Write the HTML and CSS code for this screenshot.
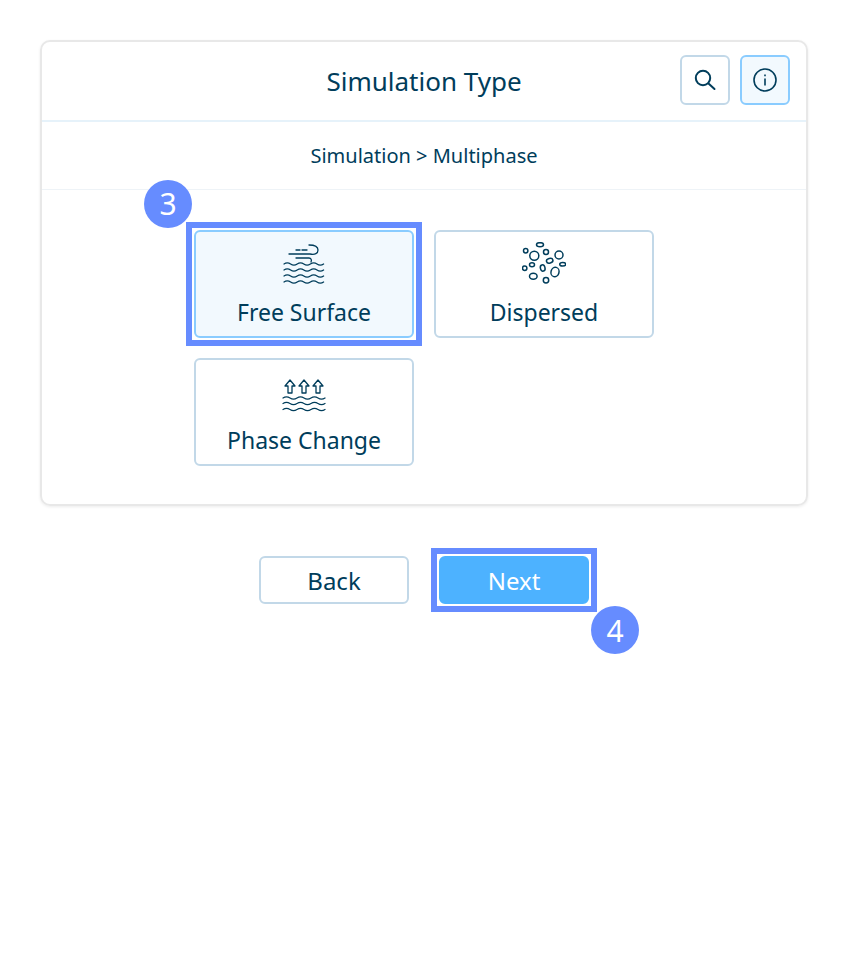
FILE: index.html
```html
<!DOCTYPE html>
<html lang="en">
<head>
  <title>Simulation Type</title>
  <meta charset="UTF-8">
  <link rel="stylesheet" href="styles.css">
</head>
<body>
  <div class="card">
    <div class="card-header">
      <h1 class="card-title">Simulation Type</h1>
      <div class="header-actions">
        <button class="icon-btn">
          <svg width="24" height="24" viewBox="0 0 24 24" fill="none" stroke="#003d5b" stroke-width="2" stroke-linecap="round">
            <circle cx="10" cy="10" r="7.200"/>
            <path d="M15.500 15.400L21.500 21"/>
          </svg>
        </button>
        <button class="icon-btn active">
          <svg width="24" height="24" viewBox="0 0 24 24" fill="none" stroke="#003d5b" stroke-width="1.600">
            <circle cx="12" cy="12" r="11"/>
            <path d="M12 10.500V17.500"/>
            <path d="M12 6.600V8.200"/>
          </svg>
        </button>
      </div>
    </div>
    <div class="breadcrumb">Simulation &gt; Multiphase</div>
    <div class="option-grid">
      <div class="option selected">
        <svg class="option-icon" width="44" height="44" viewBox="0 0 44 44" fill="none" stroke="#003d5b" stroke-width="1.300" stroke-linecap="round">
          <path d="M7 12H28C33 13 36 11.500 36 8C36 5 33 3 27 3"/>
          <path d="M14 8H18M20 8H25"/>
          <path d="M14 16H27C29 16 30 18 29 20"/>
          <path d="M2 22q3.300-2.200 6.600 0t6.600 0t6.600 0t6.600 0t6.600 0t6.600 0"/>
          <path d="M2 28q3.300-2.200 6.600 0t6.600 0t6.600 0t6.600 0t6.600 0t6.600 0"/>
          <path d="M2 34q3.300-2.200 6.600 0t6.600 0t6.600 0t6.600 0t6.600 0t6.600 0"/>
          <path d="M2 40q3.300-2.200 6.600 0t6.600 0t6.600 0t6.600 0t6.600 0t6.600 0"/>
        </svg>
        <span>Free Surface</span>
        <div class="step-badge">3</div>
      </div>
      <div class="option">
        <svg class="option-icon" width="44" height="44" viewBox="0 0 44 44" fill="none" stroke="#003d5b" stroke-width="1.500">
          <ellipse cx="18" cy="2.700" rx="3.500" ry="2"/>
          <circle cx="3.700" cy="8.700" r="2.200"/>
          <circle cx="12.300" cy="13.700" r="4.500"/>
          <circle cx="24" cy="10" r="2.500"/>
          <circle cx="37" cy="13" r="4"/>
          <ellipse cx="27.700" cy="18.700" rx="3.300" ry="2.300" transform="rotate(-15 27.700 18.700)"/>
          <ellipse cx="40.700" cy="22.300" rx="3" ry="1.800"/>
          <circle cx="2.700" cy="26.300" r="2.200"/>
          <ellipse cx="10" cy="22.700" rx="2.500" ry="2"/>
          <ellipse cx="20.700" cy="26" rx="2.300" ry="3.200" transform="rotate(-15 20.700 26)"/>
          <ellipse cx="33" cy="30" rx="4" ry="4.800" transform="rotate(15 33 30)"/>
          <ellipse cx="11.300" cy="34.300" rx="3.800" ry="3"/>
          <circle cx="24" cy="38.300" r="2.700"/>
        </svg>
        <span>Dispersed</span>
      </div>
      <div class="option">
        <svg class="option-icon" width="46" height="44" viewBox="0 0 46 44" fill="none" stroke="#003d5b" stroke-width="1.300" stroke-linecap="round" stroke-linejoin="round">
          <path d="M7 23V16H4L9 10L14 16H11V23Z"/>
          <path d="M21 23V16H18L23 10L28 16H25V23Z"/>
          <path d="M35 23V16H32L37 10L42 16H39V23Z"/>
          <path d="M2 28q3.500-2.200 7 0t7 0t7 0t7 0t7 0t7 0"/>
          <path d="M2 33.500q3.500-2.200 7 0t7 0t7 0t7 0t7 0t7 0"/>
          <path d="M2 39.500q3.500-2.200 7 0t7 0t7 0t7 0t7 0t7 0"/>
        </svg>
        <span>Phase Change</span>
      </div>
    </div>
  </div>
  <div class="footer-actions">
    <button class="btn">Back</button>
    <div class="next-wrap">
      <button class="btn btn-primary">Next</button>
      <div class="step-badge badge-next">4</div>
    </div>
  </div>
</body>
</html>
```

FILE: styles.css
```css
:root {
  --primary: #003d5b;
  --border: #c2d8e8;
  --active-border: #8accff;
  --active-bg: #f2f9fe;
  --blue: #4db2ff;
  --highlight: #668cff;
}

* {
  margin: 0;
  padding: 0;
  box-sizing: border-box;
  font-family: 'Noto Sans', sans-serif;
}

body {
  background: white;
  color: var(--primary);
  padding: 40px;
  min-height: 100vh;
}

.card {
  border: 2px solid #e8e8e8;
  border-radius: 10px;
  box-shadow: 0 1px 3px rgba(0, 0, 0, 0.08);
  height: 466px;
}

.card-header {
  display: flex;
  align-items: center;
  justify-content: center;
  position: relative;
  height: 80px;
  border-bottom: 2px solid #e6f2fa;
}

.card-title {
  font-size: 26px;
  font-weight: 400;
  line-height: 1.4;
}

.header-actions {
  position: absolute;
  top: 13px;
  right: 16px;
  display: flex;
  gap: 10px;
}

.icon-btn {
  display: flex;
  align-items: center;
  justify-content: center;
  width: 50px;
  height: 50px;
  background: white;
  border: 2px solid var(--border);
  border-radius: 6px;
}

.icon-btn.active {
  background: var(--active-bg);
  border-color: var(--active-border);
}

.breadcrumb {
  height: 68px;
  display: flex;
  align-items: center;
  justify-content: center;
  font-size: 20px;
  border-bottom: 1px solid #eef3f7;
}

.option-grid {
  display: grid;
  grid-template-columns: 220px 220px;
  grid-auto-rows: 108px;
  gap: 20px;
  justify-content: center;
  margin-top: 40px;
}

.option {
  position: relative;
  display: flex;
  flex-direction: column;
  align-items: center;
  border: 2px solid var(--border);
  border-radius: 6px;
  padding-top: 10px;
  font-size: 23px;
  line-height: 32px;
  background: white;
}

.option-icon {
  margin-bottom: 10px;
}

.option.selected {
  background: var(--active-bg);
  border-color: var(--active-border);
}

/* square highlight ring around the current step */
.option.selected::after,
.next-wrap::after {
  content: '';
  position: absolute;
  inset: -10px;
  border: 6px solid var(--highlight);
  pointer-events: none;
}

.next-wrap::after {
  inset: -8px;
}

.step-badge {
  position: absolute;
  left: -52px;
  top: -52px;
  z-index: 1;
  display: flex;
  align-items: center;
  justify-content: center;
  width: 48px;
  height: 48px;
  border-radius: 50%;
  background: var(--highlight);
  color: white;
  font-size: 30px;
}

.footer-actions {
  display: flex;
  justify-content: center;
  gap: 30px;
  margin-top: 50px;
}

.next-wrap {
  position: relative;
  height: 48px;
}

.btn {
  display: block;
  width: 150px;
  height: 48px;
  background: white;
  border: 2px solid var(--border);
  border-radius: 6px;
  color: var(--primary);
  font-size: 24px;
}

.btn-primary {
  background: var(--blue);
  border-color: var(--blue);
  color: white;
}

.badge-next {
  left: auto;
  top: auto;
  right: -50px;
  bottom: -50px;
}
```
